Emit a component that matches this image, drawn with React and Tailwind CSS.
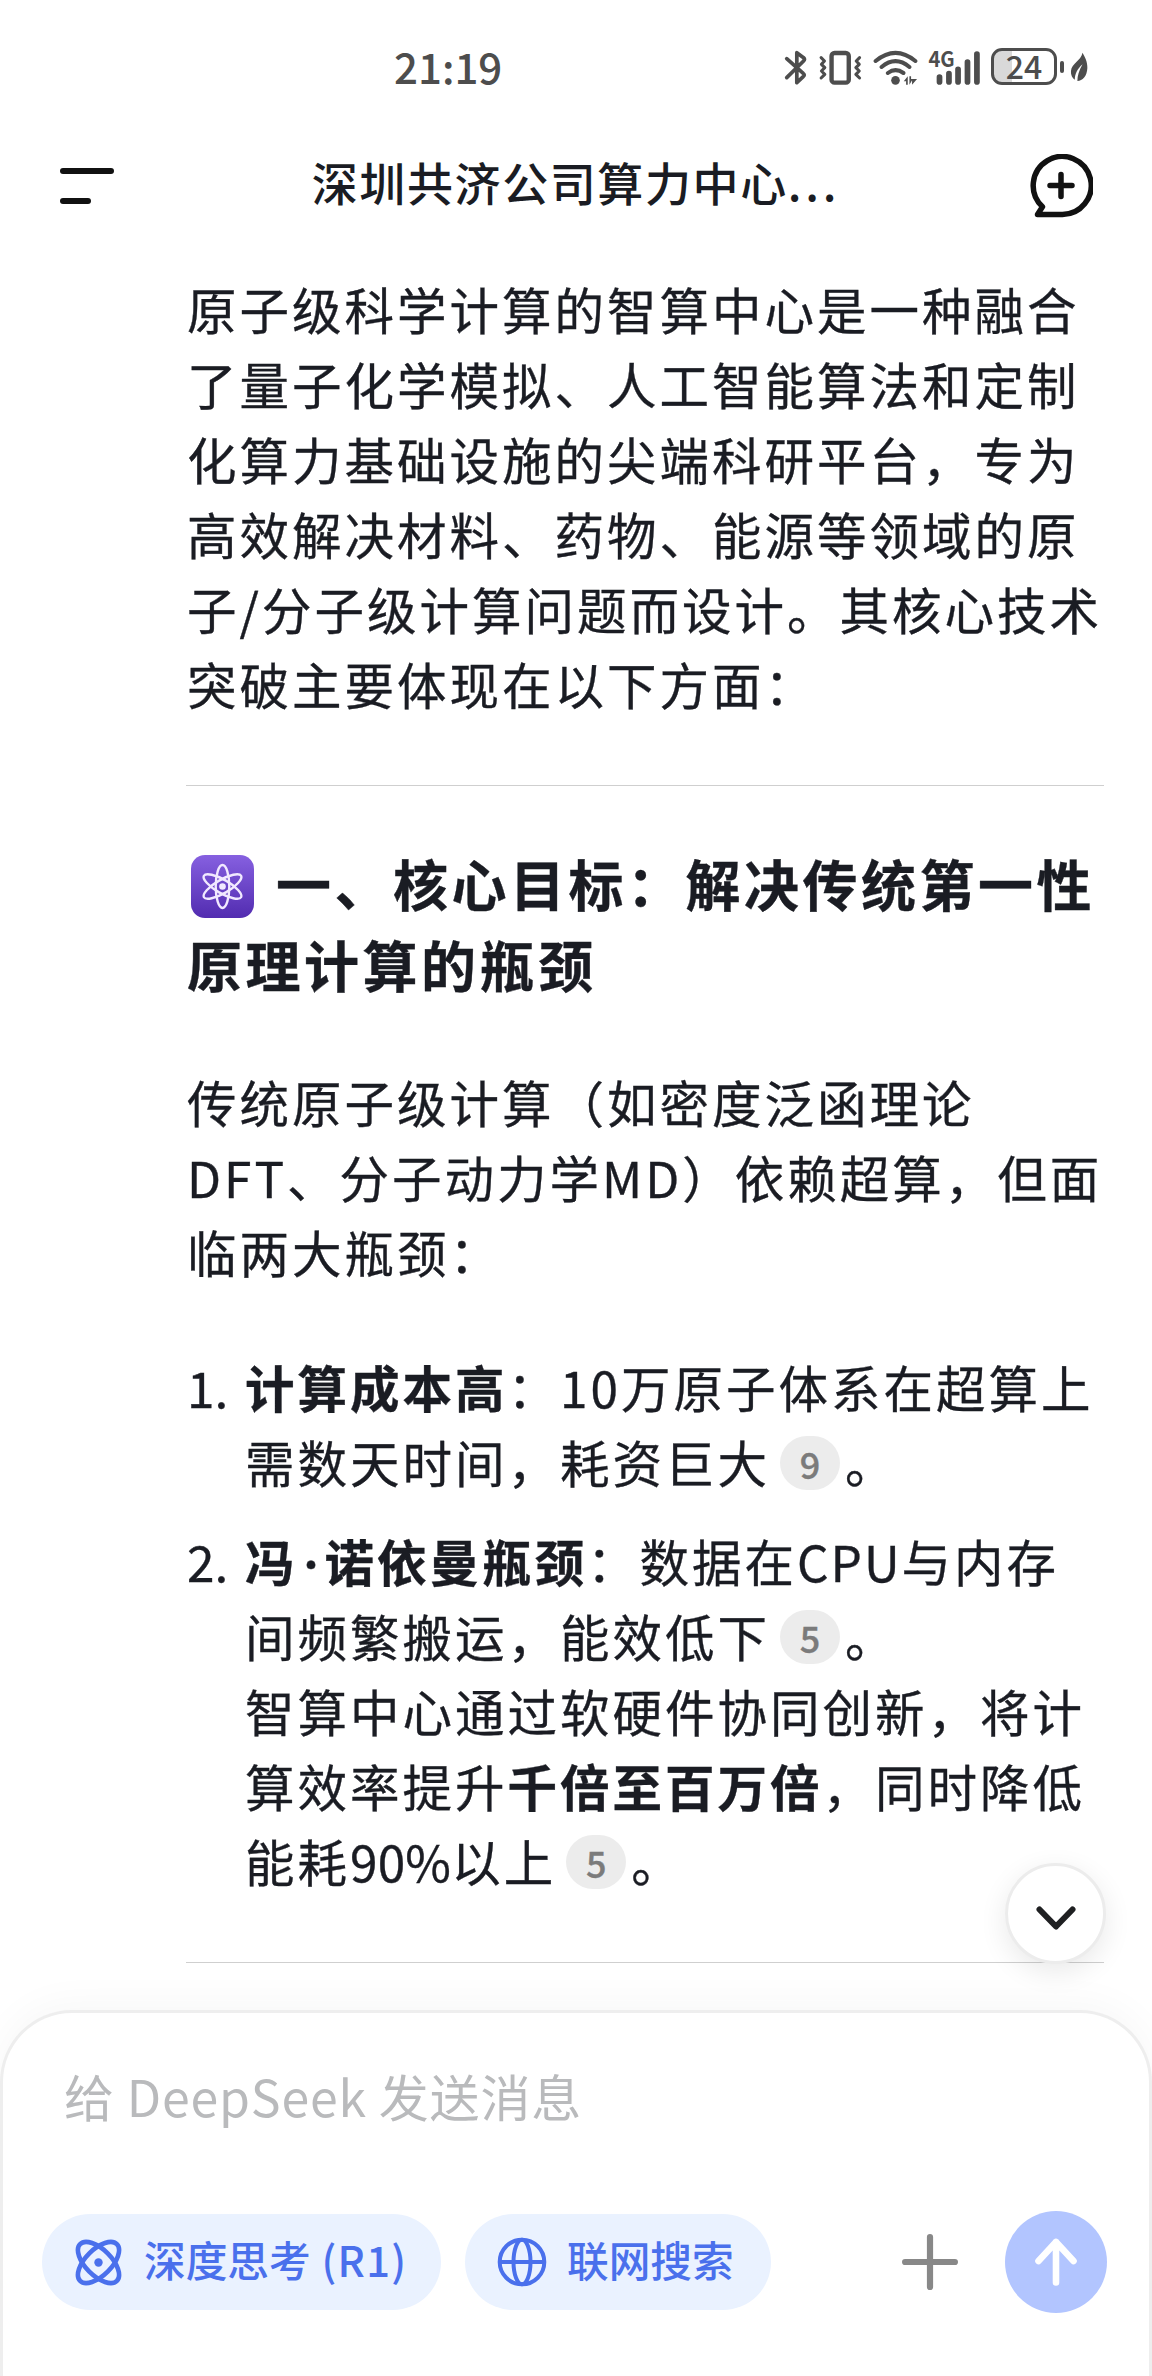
import React from "react";

const INTRO = [
    "原子级科学计算的智算中心是一种融合",
    "了量子化学模拟、人工智能算法和定制",
    "化算力基础设施的尖端科研平台，专为",
    "高效解决材料、药物、能源等领域的原",
    "子/分子级计算问题而设计。其核心技术",
    "突破主要体现在以下方面："
];

const BACKGROUND = [
    "传统原子级计算（如密度泛函理论",
    "DFT、分子动力学MD）依赖超算，但面",
    "临两大瓶颈："
];

const Line = ({ children }) => <span className="block h-[1lh] whitespace-nowrap">{children}</span>;

const Cite = ({ children }) => (
    <span className="ml-[10px] mr-[5px] inline-flex h-[54px] w-[60px] items-center justify-center rounded-full bg-[#ececec] align-[4px] text-[36px] leading-none font-medium tracking-normal text-[#7b7b7b]">
        {children}
    </span>
);

const Divider = () => <div className="ml-[186px] h-px w-[918px] shrink-0 bg-[#cfcfcf]" />;

const StatusIcons = () => (
    <div className="flex h-10 items-center text-[#4d4d4d]">
        {/* Bluetooth */}
        <svg width="30" height="40" viewBox="70 50 89 120" preserveAspectRatio="none" fill="none" stroke="currentColor" strokeWidth="11" strokeLinecap="round" strokeLinejoin="round">
            <path d="M81 85L130 129Q136 134 130 139L111 157V67L131 82Q136 87 131 92L81 142" />
        </svg>
        {/* Vibrate */}
        <svg width="54" height="40" viewBox="159 50 160 120" preserveAspectRatio="none" fill="none" stroke="currentColor" strokeLinecap="round" strokeLinejoin="round">
            <rect x="214" y="68" width="51" height="89" rx="9" strokeWidth="13" />
            <path d="M183 82L193 92L184 102L194 112L184 122L194 132L183 143" strokeWidth="9" />
            <path d="M297 82L287 92L296 102L286 112L296 122L286 132L297 143" strokeWidth="9" />
        </svg>
        {/* Wifi */}
        <svg width="56" height="40" viewBox="319 50 169 120" preserveAspectRatio="none" fill="none" stroke="currentColor" strokeWidth="12" strokeLinecap="round">
            <path d="M345 92Q405 43 465 92M363 110Q405 75 447 110M382 128Q405 111 429 128" />
            <circle cx="405" cy="150" r="13" fill="currentColor" stroke="none" />
            <path d="M430 153L442 138V163H437V153ZM447 163V138H452V146H470L455 163V150Z" fill="currentColor" stroke="none" />
        </svg>
        {/* Mobile signal */}
        <svg className="overflow-visible" width="61" height="40" viewBox="488 50 181 120" preserveAspectRatio="none" fill="none" stroke="currentColor" strokeWidth="17" strokeLinecap="round">
            <path d="M537 140V155M565 130V155M592 117V155M620 95V155M648 71V155" />
            <text x="504" y="111" fontSize="64" fontWeight="700" fontFamily="Noto Sans CJK SC, sans-serif" fill="currentColor" stroke="none" textLength="78" lengthAdjust="spacingAndGlyphs">4G</text>
        </svg>
        {/* Battery */}
        <div className="ml-[7px] flex h-[37px] w-[66px] items-center justify-center rounded-[11px] border-[3px] border-[#4d4d4d] bg-linear-to-r from-[#d9d9d9] from-30% to-white to-30% font-['Noto_Sans_CJK_SC',sans-serif] text-[32px] leading-[31px] font-medium">
            <span className="-mt-0.5">24</span>
        </div>
        <div className="ml-[3px] h-3 w-1 rounded-sm bg-[#4d4d4d]" />
        <svg className="ml-[6px]" width="18" height="40" viewBox="928 50 56 120" preserveAspectRatio="none" fill="currentColor">
            <path d="M967 67C973 78 983 93 982 113C981 137 967 152 951 152C951 137 956 120 967 102C950 116 943 133 943 148C935 143 930 134 931 122C933 98 962 92 967 67Z" />
        </svg>
    </div>
);

const StatusBar = () => (
    <div className="flex h-[133px] shrink-0 items-center justify-between pr-[64px] pl-[394px]">
        <span className="-mt-px text-[42px] leading-none font-medium text-[#4d4d4d]">21:19</span>
        <StatusIcons />
    </div>
);

const Header = () => (
    <header className="flex h-[106px] shrink-0 items-center justify-between pr-[59px] pl-[60px]">
        <button className="flex h-9 w-[54px] flex-col justify-between">
            <span className="h-1.5 w-[54px] rounded-full bg-[#111]" />
            <span className="h-1.5 w-[31px] rounded-full bg-[#111]" />
        </button>
        <h1 className="-mt-[10px] ml-[9px] text-[46px] leading-none font-medium tracking-[1.6px] whitespace-nowrap">
            深圳共济公司算力中心<span className="tracking-[3.8px]">...</span>
        </h1>
        <svg width="64" height="64" viewBox="0 0 64 64" fill="none" stroke="#111" strokeWidth="5.5" strokeLinecap="round" strokeLinejoin="round">
            <path d="M32 60.5H8.5L13.5 52.8A29 29 0 1 1 32 60.5ZM32 20.5V42.5M21 31.5H43" />
        </svg>
    </header>
);

const AtomEmoji = () => (
    <svg className="mr-[22px] ml-1 inline-block align-[-12px]" width="63" height="63" viewBox="0 0 63 63" fill="none">
        <defs>
            <linearGradient id="atom" x1="0" y1="0" x2="0" y2="1">
                <stop offset="0" stopColor="#8660e0" />
                <stop offset="1" stopColor="#522cb0" />
            </linearGradient>
        </defs>
        <rect width="63" height="63" rx="14" fill="url(#atom)" />
        <g stroke="#f1e9ff" strokeWidth="2.4">
            <ellipse cx="31.5" cy="31.5" rx="6.8" ry="21.5" />
            <ellipse cx="31.5" cy="31.5" rx="6.8" ry="21.5" transform="rotate(60 31.5 31.5)" />
            <ellipse cx="31.5" cy="31.5" rx="6.8" ry="21.5" transform="rotate(120 31.5 31.5)" />
        </g>
        <circle cx="31.5" cy="31.5" r="3.3" fill="#f1e9ff" />
    </svg>
);

const Answer = () => (
    <main className="flex flex-1 flex-col text-[49.5px] leading-[75px] tracking-[3px] [-webkit-text-stroke:0.35px_currentColor]">
        <p className="mt-[32px] pl-[187px]">
            {INTRO.map((line) => <Line key={line}>{line}</Line>)}
        </p>
        <div className="mt-[64px]"><Divider /></div>

        <h2 className="mt-[56px] pl-[187px] text-[55px] leading-[81px] font-bold tracking-[3.5px]">
            <Line><AtomEmoji />一、核心目标：解决传统第一性</Line>
            <Line>原理计算的瓶颈</Line>
        </h2>

        <p className="mt-[60px] pl-[187px]">
            {BACKGROUND.map((line) => <Line key={line}>{line}</Line>)}
        </p>

        <ol className="mt-[60px] flex flex-col gap-6 pl-[187px]">
            <li className="flex">
                <span className="w-[58px] shrink-0 tracking-normal">1.</span>
                <div>
                    <Line><b>计算成本高</b>：10万原子体系在超算上</Line>
                    <Line>需数天时间，耗资巨大<Cite>9</Cite>。</Line>
                </div>
            </li>
            <li className="flex">
                <span className="w-[58px] shrink-0 tracking-normal">2.</span>
                <div>
                    <Line>
                        <b>冯<span className="inline-block w-[27px] text-center font-['Inter',sans-serif] tracking-normal">·</span>诺依曼瓶颈</b>：数据在<span className="tracking-[2px]">CPU</span>与内存
                    </Line>
                    <Line>间频繁搬运，能效低下<Cite>5</Cite>。</Line>
                    <Line>智算中心通过软硬件协同创新，将计</Line>
                    <Line>算效率提升<b>千倍至百万倍</b>，同时降低</Line>
                    <Line>能耗<span className="tracking-[0.2px]">90%</span>以上<Cite>5</Cite>。</Line>
                </div>
            </li>
        </ol>
        <div className="mt-[64px]"><Divider /></div>
    </main>
);

const Composer = () => (
    <footer className="relative h-[366px] shrink-0 rounded-t-[72px] border-[3px] border-b-0 border-[#eee] bg-white shadow-[0_-6px_40px_rgba(0,0,0,0.035)]">
        <button className="absolute -top-[150px] right-[43px] flex size-[101px] items-center justify-center rounded-full border-[3px] border-[#ececec] bg-white shadow-[0_8px_28px_rgba(0,0,0,0.09)]">
            <svg className="mt-2" width="40" height="24" viewBox="0 0 40 24" fill="none" stroke="#1f2022" strokeWidth="6" strokeLinecap="round" strokeLinejoin="round">
                <path d="M3.5 3.5L20 20.5L36.5 3.5" />
            </svg>
        </button>
        <div className="mt-[46px] pl-[61px] text-[50px] leading-[72px] tracking-[0.8px] text-[#b9babc]">给 DeepSeek 发送消息</div>
        <div className="mt-[80px] flex h-[102px] items-center pr-[42px] pl-[39px] text-[41.7px] leading-none font-medium text-[#4a70ec]">
            <button className="flex h-24 w-[399px] items-center gap-[22px] rounded-full bg-[#eaf2ff] pl-[33px] whitespace-nowrap">
                <svg width="47" height="47" viewBox="0 0 47 47" fill="none" stroke="currentColor" strokeWidth="4.6">
                    <ellipse cx="23.5" cy="23.5" rx="13" ry="26" transform="rotate(45 23.5 23.5)" />
                    <ellipse cx="23.5" cy="23.5" rx="13" ry="26" transform="rotate(-45 23.5 23.5)" />
                    <circle cx="23.5" cy="23.5" r="4.2" fill="currentColor" stroke="none" />
                </svg>
                <span className="-mt-1">深度思考<span className="tracking-[1.3px]"> (R1)</span></span>
            </button>
            <button className="ml-6 flex h-24 w-[306px] items-center gap-5 rounded-full bg-[#eaf2ff] pl-8 whitespace-nowrap">
                <svg width="50" height="50" viewBox="0 0 50 50" fill="none" stroke="currentColor" strokeWidth="4">
                    <circle cx="25" cy="25" r="22.3" />
                    <ellipse cx="25" cy="25" rx="8.5" ry="22.3" />
                    <path d="M2.5 25H47.5" />
                </svg>
                <span className="-mt-1">联网搜索</span>
            </button>
            <svg className="ml-auto" width="56" height="56" viewBox="0 0 56 56" fill="none" stroke="#888" strokeWidth="6.2" strokeLinecap="round">
                <path d="M28 3.1V52.9M3.1 28H52.9" />
            </svg>
            <button className="ml-[47px] flex size-[102px] items-center justify-center rounded-full bg-[#b2c5ff]">
                <svg width="44" height="50" viewBox="0 0 44 50" fill="none" stroke="#fff" strokeWidth="6.6" strokeLinecap="round" strokeLinejoin="round">
                    <path d="M22 45.5V5M4.5 24L22 5L39.5 24" />
                </svg>
            </button>
        </div>
    </footer>
);

export default function App() {
    return (
        <div className="flex h-[2376px] w-[1152px] flex-col overflow-hidden bg-white font-['Noto_Sans_CJK_SC',sans-serif] text-[#1a1c23]">
            <StatusBar />
            <Header />
            <Answer />
            <Composer />
        </div>
    );
}
